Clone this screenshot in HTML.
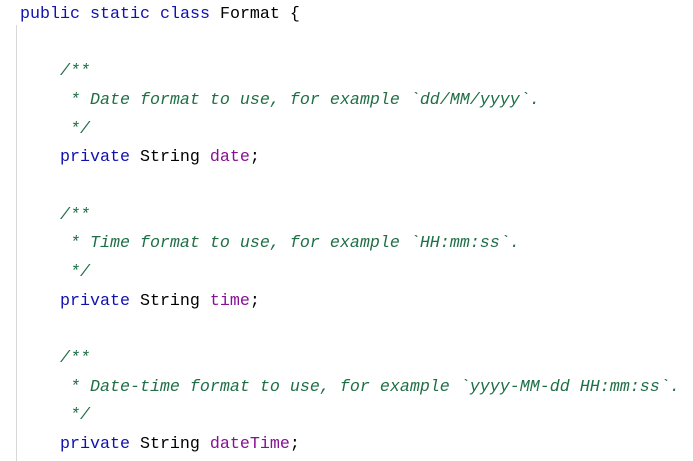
<!DOCTYPE html>
<html><head><meta charset="utf-8"><style>
html,body{margin:0;padding:0;background:#fff;width:693px;height:461px;overflow:hidden}
pre{margin:0;position:absolute;left:20px;top:1px;font-family:"Liberation Mono",monospace;font-size:16.67px;line-height:28.67px;color:#000}
.k{color:#1010b0}.c{color:#1f6f46;font-style:italic}.f{color:#871094}
.g{position:absolute;left:16px;top:25px;width:1px;height:436px;background:#d8d8d8}
</style></head><body>
<div class="g"></div>
<pre><span class="k">public</span> <span class="k">static</span> <span class="k">class</span> Format {

    <span class="c">/**</span>
<span class="c">     * Date format to use, for example `dd/MM/yyyy`.</span>
<span class="c">     */</span>
    <span class="k">private</span> String <span class="f">date</span>;

    <span class="c">/**</span>
<span class="c">     * Time format to use, for example `HH:mm:ss`.</span>
<span class="c">     */</span>
    <span class="k">private</span> String <span class="f">time</span>;

    <span class="c">/**</span>
<span class="c">     * Date-time format to use, for example `yyyy-MM-dd HH:mm:ss`.</span>
<span class="c">     */</span>
    <span class="k">private</span> String <span class="f">dateTime</span>;
</pre>
</body></html>
